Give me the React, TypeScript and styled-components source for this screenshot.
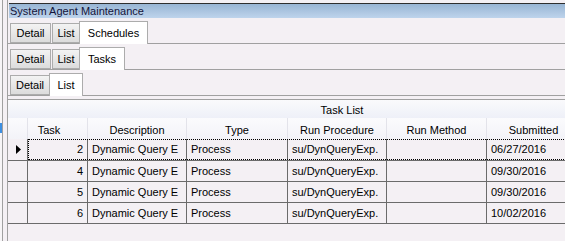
import React from "react";
import styled, { createGlobalStyle } from "styled-components";

const GlobalStyle = createGlobalStyle`
  html, body { margin: 0; padding: 0; background: #f4f0f4; }
  body {
    font-family: "Liberation Sans", Arial, sans-serif;
    font-size: 11px;
    color: #000;
  }
`;

const Frame = styled.div`
  display: flex;
  width: 565px;
  height: 241px;
  overflow: hidden;
  background: #f4f0f4;
`;

const SideStrip = styled.div`
  flex: none;
  width: 2px;
  display: flex;
  flex-direction: column;
  padding-top: 123px;
  box-sizing: border-box;
  background: #f7f5f7;
`;

const BlueMark = styled.div`
  height: 10px;
  background: #3d8fe2;
`;

const Splitter = styled.div`
  flex: none;
  width: 1px;
  margin-right: 4px;
  background: #a0a0a0;
`;

const Pane = styled.div`
  flex: none;
  width: 720px;
  border-left: 1px solid #a0a0a0;
  padding-top: 3px;
  display: flex;
  flex-direction: column;
`;

const TitleBar = styled.div`
  margin-left: 1px;
  height: 14px;
  border-top: 1px solid #2e2e2e;
  background: linear-gradient(#98b5d4, #bed4ec);
  padding-left: 1px;
  line-height: 15px;
  color: #14143a;
  white-space: nowrap;
`;

const TabStrip = styled.div`
  display: flex;
  align-items: flex-end;
  height: 25px;
  padding-left: 2px;
  border-bottom: 1px solid #a0a0a0;
`;

const Tab = styled.div<{ $active?: boolean; $w: number; $ml: number }>`
  box-sizing: border-box;
  flex: none;
  width: ${(p) => p.$w}px;
  height: ${(p) => (p.$active ? 23 : 20)}px;
  margin-left: ${(p) => p.$ml}px;
  margin-bottom: ${(p) => (p.$active ? -1 : 0)}px;
  border: 1px solid #acacac;
  border-bottom: ${(p) => (p.$active ? "none" : "1px solid #acacac")};
  background: ${(p) =>
    p.$active ? "#ffffff" : "linear-gradient(#f3f3f3, #dcdcdc)"};
  display: flex;
  align-items: center;
  justify-content: center;
  padding-bottom: ${(p) => (p.$active ? 1 : 0)}px;
  position: relative;
  z-index: ${(p) => (p.$active ? 1 : 0)};
  white-space: nowrap;
`;

const Grid = styled.div`
  margin-top: 3px;
  width: 668px;
  border-top: 1px solid #a0a0a0;
  display: flex;
  flex-direction: column;
`;

const Caption = styled.div`
  height: 18px;
  line-height: 20px;
  text-align: center;
  background: linear-gradient(#fafafc, #eef0f8);
`;

const HeaderRow = styled.div`
  display: flex;
  height: 21px;
  background: linear-gradient(#fbfbfd, #f3f3f8);
`;

const HeaderCell = styled.div<{ $w: number; $pr?: number }>`
  box-sizing: border-box;
  flex: none;
  width: ${(p) => p.$w}px;
  border-right: 1px solid #e3e3ea;
  display: flex;
  align-items: center;
  justify-content: center;
  padding-top: 3px;
  padding-right: ${(p) => p.$pr ?? 0}px;
  white-space: nowrap;
`;

const Row = styled.div<{ $first?: boolean }>`
  box-sizing: border-box;
  display: flex;
  height: ${(p) => (p.$first ? 22 : 21)}px;
  border-bottom: 1px solid #6b6b6b;
`;

const RowHeader = styled.div`
  box-sizing: border-box;
  flex: none;
  width: 20px;
  border-right: 1px solid #6b6b6b;
  display: flex;
  align-items: center;
  justify-content: center;
  padding-left: 1px;
`;

const Cells = styled.div<{ $focused?: boolean }>`
  display: flex;
  flex: 1;
  outline: ${(p) => (p.$focused ? "1px dotted #000" : "none")};
  outline-offset: -1px;
`;

const Cell = styled.div<{ $w: number; $right?: boolean }>`
  box-sizing: border-box;
  flex: none;
  width: ${(p) => p.$w}px;
  border-right: 1px solid #6b6b6b;
  display: flex;
  align-items: center;
  justify-content: ${(p) => (p.$right ? "flex-end" : "flex-start")};
  padding: 0 4px 1px 4px;
  white-space: nowrap;
  overflow: hidden;
`;

const Arrow = () => (
  <svg width="5" height="9" viewBox="0 0 5 9">
    <polygon points="0,0 5,4.5 0,9" fill="#000" />
  </svg>
);

const columns = [
  { key: "task", title: "Task", w: 60, right: true, pr: 17 },
  { key: "desc", title: "Description", w: 99 },
  { key: "type", title: "Type", w: 101 },
  { key: "proc", title: "Run Procedure", w: 99 },
  { key: "method", title: "Run Method", w: 100 },
  { key: "sub", title: "Submitted", w: 94 },
];

const rows = [
  { task: "2", desc: "Dynamic Query E", type: "Process", proc: "su/DynQueryExp.", method: "", sub: "06/27/2016" },
  { task: "4", desc: "Dynamic Query E", type: "Process", proc: "su/DynQueryExp.", method: "", sub: "09/30/2016" },
  { task: "5", desc: "Dynamic Query E", type: "Process", proc: "su/DynQueryExp.", method: "", sub: "09/30/2016" },
  { task: "6", desc: "Dynamic Query E", type: "Process", proc: "su/DynQueryExp.", method: "", sub: "10/02/2016" },
];

type TabDef = { label: string; w: number; ml: number; active?: boolean };

const strips: TabDef[][] = [
  [
    { label: "Detail", w: 41, ml: 0 },
    { label: "List", w: 28, ml: 1 },
    { label: "Schedules", w: 69, ml: -1, active: true },
  ],
  [
    { label: "Detail", w: 41, ml: 0 },
    { label: "List", w: 28, ml: 1 },
    { label: "Tasks", w: 46, ml: -1, active: true },
  ],
  [
    { label: "Detail", w: 40, ml: 0 },
    { label: "List", w: 34, ml: -1, active: true },
  ],
];

export default function App() {
  return (
    <>
      <GlobalStyle />
      <Frame>
        <SideStrip>
          <BlueMark />
        </SideStrip>
        <Splitter />
        <Pane>
          <TitleBar>System Agent Maintenance</TitleBar>
          {strips.map((tabs, i) => (
            <TabStrip key={i}>
              {tabs.map((t) => (
                <Tab key={t.label} $w={t.w} $ml={t.ml} $active={t.active}>
                  {t.label}
                </Tab>
              ))}
            </TabStrip>
          ))}
          <Grid>
            <Caption>Task List</Caption>
            <HeaderRow>
              <HeaderCell $w={20} />
              {columns.map((c) => (
                <HeaderCell key={c.key} $w={c.w} $pr={c.pr}>
                  {c.title}
                </HeaderCell>
              ))}
            </HeaderRow>
            {rows.map((r, i) => (
              <Row key={r.task} $first={i === 0}>
                <RowHeader>{i === 0 && <Arrow />}</RowHeader>
                <Cells $focused={i === 0}>
                  {columns.map((c) => (
                    <Cell key={c.key} $w={c.w} $right={c.right}>
                      {(r as Record<string, string>)[c.key]}
                    </Cell>
                  ))}
                </Cells>
              </Row>
            ))}
          </Grid>
        </Pane>
      </Frame>
    </>
  );
}
